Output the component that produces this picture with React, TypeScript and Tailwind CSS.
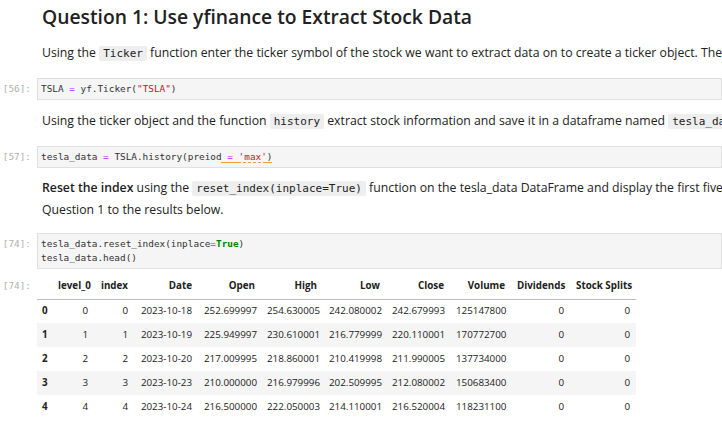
const PROSE = "font-['Open_Sans',sans-serif]";
const MONO = "font-['DejaVu_Sans_Mono',monospace]";

type Row = {
  label: string;
  level0: number;
  index: number;
  date: string;
  open: string;
  high: string;
  low: string;
  close: string;
  volume: string;
};

const ROWS: Row[] = [
  { label: "0", level0: 0, index: 0, date: "2023-10-18", open: "252.699997", high: "254.630005", low: "242.080002", close: "242.679993", volume: "125147800" },
  { label: "1", level0: 1, index: 1, date: "2023-10-19", open: "225.949997", high: "230.610001", low: "216.779999", close: "220.110001", volume: "170772700" },
  { label: "2", level0: 2, index: 2, date: "2023-10-20", open: "217.009995", high: "218.860001", low: "210.419998", close: "211.990005", volume: "137734000" },
  { label: "3", level0: 3, index: 3, date: "2023-10-23", open: "210.000000", high: "216.979996", low: "202.509995", close: "212.080002", volume: "150683400" },
  { label: "4", level0: 4, index: 4, date: "2023-10-24", open: "216.500000", high: "222.050003", low: "214.110001", close: "216.520004", volume: "118231100" },
];

/* column widths measured off the notebook render */
const COLS = [
  { name: "", w: "w-[15px]" },
  { name: "level_0", w: "w-[42px]" },
  { name: "index", w: "w-[40px]" },
  { name: "Date", w: "w-[64px]" },
  { name: "Open", w: "w-[63px]" },
  { name: "High", w: "w-[62px]" },
  { name: "Low", w: "w-[63px]" },
  { name: "Close", w: "w-[64px]" },
  { name: "Volume", w: "w-[61px]" },
  { name: "Dividends", w: "w-[59px]" },
  { name: "Stock Splits", w: "w-[66px]" },
];

function Prompt({ n, className = "" }: { n: number; className?: string }) {
  return (
    <div className={`w-[37px] shrink-0 pr-[6px] text-right text-[9.4px] leading-[14px] text-[#b0b0b0] ${MONO} ${className}`}>
      [{n}]:
    </div>
  );
}

function Code({ children }: { children: React.ReactNode }) {
  return (
    <code className={`rounded-[2px] bg-[#eeeeee] px-[4px] py-[1px] text-[11px] text-[#212121] ${MONO}`}>
      {children}
    </code>
  );
}

function CodeCell({ n, children }: { n: number; children: React.ReactNode }) {
  return (
    <div className="flex items-start">
      <Prompt n={n} className="pt-[4px]" />
      <div
        className={`flex-1 whitespace-pre border border-[#e0e0e0] bg-[#f5f5f5] px-[3px] py-[3px] text-[9.4px] leading-[14px] text-[#333333] ${MONO}`}
      >
        {children}
      </div>
    </div>
  );
}

const Op = ({ children }: { children: React.ReactNode }) => <span className="text-[#aa22ff]">{children}</span>;
const Str = ({ children }: { children: React.ReactNode }) => <span className="text-[#ba2121]">{children}</span>;

export default function App() {
  return (
    <div className={`h-[436px] w-[722px] overflow-hidden bg-white ${PROSE}`}>
      <div className="pl-[42px] pt-[5px]">
        <h2 className="whitespace-nowrap text-[19.3px] font-semibold leading-[24px] text-[#212121]">
          Question 1: Use yfinance to Extract Stock Data
        </h2>
      </div>

      <p className="mt-[13px] whitespace-nowrap pl-[42px] text-[12.25px] leading-[21px] text-[#212121]">
        Using the <Code>Ticker</Code> function enter the ticker symbol of the stock we want to extract data on to create
        a ticker object. The stock is Tesla and its ticker symbol is TSLA.
      </p>

      <div className="mt-[14px]">
        <CodeCell n={56}>
          TSLA <Op>=</Op> yf.Ticker(<Str>"TSLA"</Str>)
        </CodeCell>
      </div>

      <p className="mt-[10px] whitespace-nowrap pl-[42px] text-[12.25px] leading-[21px] text-[#212121]">
        Using the ticker object and the function <Code>history</Code> extract stock information and save it in a
        dataframe named <Code>tesla_data</Code>. Set the <Code>period</Code> parameter to "max".
      </p>

      <div className="mt-[14px]">
        <CodeCell n={57}>
          tesla_data <Op>=</Op> TSLA.history(preiod
          <span className="underline decoration-[#f0a030] decoration-dashed underline-offset-[2px]">
            {" "}
            <Op>=</Op> <Str>'max'</Str>)
          </span>
        </CodeCell>
      </div>

      <div className="mt-[9px] pl-[42px] text-[12.25px] leading-[21px] text-[#212121]">
        <p className="whitespace-nowrap">
          <b className="font-semibold">Reset the index</b> using the <Code>reset_index(inplace=True)</Code> function on
          the tesla_data DataFrame and display the first five rows of the tesla_data dataframe using the head function.
        </p>
        <p>Question 1 to the results below.</p>
      </div>

      <div className="mt-[13px]">
        <CodeCell n={74}>
          <div>
            tesla_data.reset_index(inplace<Op>=</Op>
            <span className="font-bold text-[#008000]">True</span>)
          </div>
          <div>tesla_data.head()</div>
        </CodeCell>
      </div>

      <div className="mt-[5px] flex items-start">
        <Prompt n={74} className="pt-[5px]" />
        <table className="w-[599px] table-fixed border-collapse whitespace-nowrap text-[9.8px] text-[#212121]">
          <thead>
            <tr className="h-[25px] border-b border-[#bdbdbd]">
              {COLS.map((c) => (
                <th key={c.name || "label"} className={`${c.w} px-[6px] text-right align-middle font-bold`}>
                  {c.name}
                </th>
              ))}
            </tr>
          </thead>
          <tbody>
            {ROWS.map((r, i) => (
              <tr key={r.label} className={`h-[24px] ${i % 2 === 1 ? "bg-[#f5f5f5]" : "bg-white"}`}>
                <th className="px-[5px] text-left font-bold">{r.label}</th>
                <td className="px-[6px] text-right">{r.level0}</td>
                <td className="px-[6px] text-right">{r.index}</td>
                <td className="px-[6px] text-right">{r.date}</td>
                <td className="px-[6px] text-right">{r.open}</td>
                <td className="px-[6px] text-right">{r.high}</td>
                <td className="px-[6px] text-right">{r.low}</td>
                <td className="px-[6px] text-right">{r.close}</td>
                <td className="px-[6px] text-right">{r.volume}</td>
                <td className="px-[6px] text-right">0</td>
                <td className="px-[6px] text-right">0</td>
              </tr>
            ))}
          </tbody>
        </table>
      </div>
    </div>
  );
}
